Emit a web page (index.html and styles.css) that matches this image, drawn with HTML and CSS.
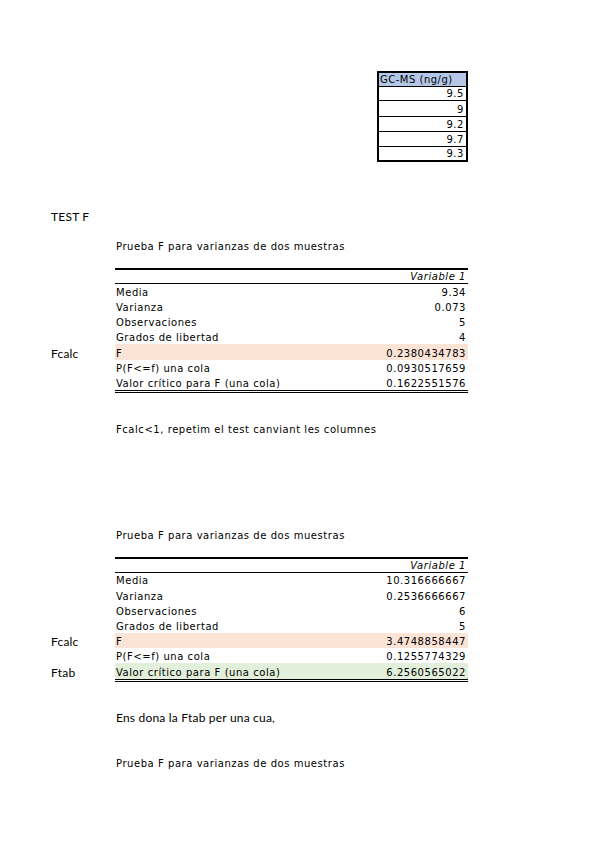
FILE: index.html
```html
<!DOCTYPE html>
<html>
<head>
<meta charset="utf-8">
<link rel="stylesheet" href="styles.css">
</head>
<body>
<div class="sheet">
  <div class="row"><span></span><span></span><span></span><span class="c gc-head">GC-MS (ng/g)</span></div>
  <div class="row"><span></span><span></span><span></span><span class="c gc num">9.5</span></div>
  <div class="row"><span></span><span></span><span></span><span class="c gc num">9</span></div>
  <div class="row"><span></span><span></span><span></span><span class="c gc num">9.2</span></div>
  <div class="row"><span></span><span></span><span></span><span class="c gc num">9.7</span></div>
  <div class="row"><span></span><span></span><span></span><span class="c gc num gc-last">9.3</span></div>
  <div class="gap g3"></div>
  <div class="row"><span></span><span class="lab">TEST F</span></div>
  <div class="gap g1"></div>
  <div class="row"><span></span><span></span><span class="txt">Prueba F para varianzas de dos muestras</span></div>
  <div class="gap g1"></div>

  <div class="row"><span></span><span></span><span class="b head-b"></span><span class="c num head-c"><i>Variable 1</i></span></div>
  <div class="row"><span></span><span></span><span class="b">Media</span><span class="c num">9.34</span></div>
  <div class="row"><span></span><span></span><span class="b">Varianza</span><span class="c num">0.073</span></div>
  <div class="row"><span></span><span></span><span class="b">Observaciones</span><span class="c num">5</span></div>
  <div class="row"><span></span><span></span><span class="b">Grados de libertad</span><span class="c num">4</span></div>
  <div class="row"><span></span><span class="lab">Fcalc</span><span class="b peach">F</span><span class="c num peach">0.2380434783</span></div>
  <div class="row"><span></span><span></span><span class="b">P(F&lt;=f) una cola</span><span class="c num">0.0930517659</span></div>
  <div class="row"><span></span><span></span><span class="b last">Valor crítico para F (una cola)</span><span class="c num last">0.1622551576</span></div>
  <div class="gap g2"></div>
  <div class="row"><span></span><span></span><span class="txt">Fcalc&lt;1, repetim el test canviant les columnes</span></div>
  <div class="gap g6"></div>
  <div class="row"><span></span><span></span><span class="txt">Prueba F para varianzas de dos muestras</span></div>
  <div class="gap g1"></div>

  <div class="row"><span></span><span></span><span class="b head-b"></span><span class="c num head-c"><i>Variable 1</i></span></div>
  <div class="row"><span></span><span></span><span class="b">Media</span><span class="c num">10.316666667</span></div>
  <div class="row"><span></span><span></span><span class="b">Varianza</span><span class="c num">0.2536666667</span></div>
  <div class="row"><span></span><span></span><span class="b">Observaciones</span><span class="c num">6</span></div>
  <div class="row"><span></span><span></span><span class="b">Grados de libertad</span><span class="c num">5</span></div>
  <div class="row"><span></span><span class="lab">Fcalc</span><span class="b peach">F</span><span class="c num peach">3.4748858447</span></div>
  <div class="row"><span></span><span></span><span class="b">P(F&lt;=f) una cola</span><span class="c num">0.1255774329</span></div>
  <div class="row"><span></span><span class="lab">Ftab</span><span class="b green last">Valor crítico para F (una cola)</span><span class="c num green last">6.2560565022</span></div>
  <div class="gap g2"></div>
  <div class="row"><span></span><span></span><span class="txt lato">Ens dona la Ftab per una cua,</span></div>
  <div class="gap g2"></div>
  <div class="row"><span></span><span></span><span class="txt">Prueba F para varianzas de dos muestras</span></div>
</div>
</body>
</html>
```
FILE: styles.css
```css
html, body {
  margin: 0;
  padding: 0;
  background: #ffffff;
}
.sheet {
  padding-top: 71px;
  font-family: "DejaVu Sans", sans-serif;
  font-size: 10px;
  letter-spacing: 0.55px;
  color: #000;
}
.row {
  display: grid;
  grid-template-columns: 51px 64px 262px 91px;
  height: 15.2px;
  line-height: 13px;
}
.row > span {
  display: flex;
  align-items: flex-end;
  box-sizing: border-box;
  white-space: nowrap;
  overflow: visible;
}
.gap { height: 0; }
.g1 { height: 15.2px; }
.g2 { height: 30.4px; }
.g3 { height: 45.6px; }
.g6 { height: 91.2px; }
.lab, .lato {
  font-family: "Lato", "Open Sans", sans-serif;
  font-size: 12px;
  letter-spacing: 0.2px;
}
.txt { padding-left: 1px; }
.b { padding-left: 1px; }
.num { justify-content: flex-end; padding-right: 2px; }
.gc-head {
  background: #b4c7e7;
  border: 2px solid #000;
  border-bottom-width: 1px;
  padding-left: 1px;
  letter-spacing: 0.5px;
}
.gc {
  border-left: 2px solid #000;
  border-right: 2px solid #000;
  border-bottom: 1px solid #000;
}
.gc-last { border-bottom-width: 2px; }
.head-b, .head-c {
  border-top: 2px solid #000;
  border-bottom: 1px solid #000;
}
.peach { background: #fbe3d6; }
.green { background: #e2efda; }
.last { box-shadow: 0 1px 0 #000, 0 2px 0 #fff, 0 3px 0 #000; }
```
